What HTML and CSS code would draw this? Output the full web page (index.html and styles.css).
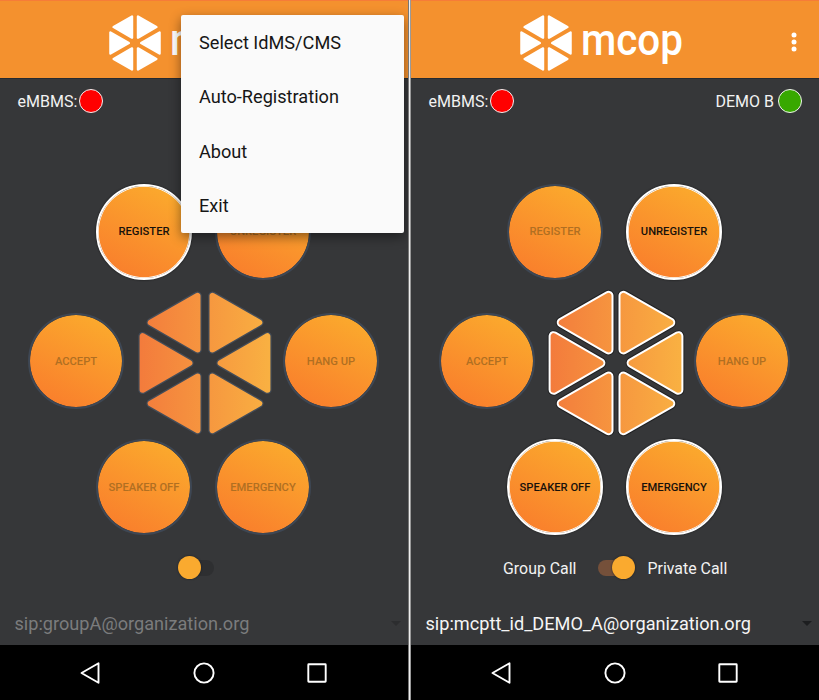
FILE: index.html
```
<!DOCTYPE html>
<html lang="en">
<head>
<meta charset="utf-8">
<title>mcop</title>
<link rel="stylesheet" href="styles.css">
</head>
<body>
<svg class="defs" width="0" height="0" aria-hidden="true">
  <defs>
    <linearGradient id="amber" gradientUnits="userSpaceOnUse" x1="-66" y1="0" x2="66" y2="0">
      <stop offset="0" stop-color="#f37b3c"/><stop offset="1" stop-color="#f9b142"/>
    </linearGradient>
    <g id="hex">
      <path d="M-54.3-40.5L-7.5-67.2V-13.6Z"/><path d="M54.3-40.5L7.5-67.2V-13.6Z"/>
      <path d="M-62.4-26.8V26.8L-15.6 0Z"/><path d="M62.4-26.8V26.8L15.6 0Z"/>
      <path d="M-54.3 40.5L-7.5 67.2V13.6Z"/><path d="M54.3 40.5L7.5 67.2V13.6Z"/>
    </g>
  </defs>
</svg>
<main class="screens">
  <section class="phone">
    <header class="bar">
      <svg class="mark" viewBox="-66 -71 132 142"><use href="#hex"/></svg>
      <svg class="word" viewBox="0 0 102 50"><text x="0" y="37" textLength="102" lengthAdjust="spacingAndGlyphs">mcop</text></svg>
    </header>
    <div class="status"><span>eMBMS:</span><i class="dot red"></i></div>
    <div class="pad">
      <div class="row"><button class="round on">REGISTER</button><button class="round">UNREGISTER</button></div>
      <div class="row wide"><button class="round">ACCEPT</button>
        <svg class="talk" viewBox="-70 -75 140 150"><use href="#hex" class="edge"/><use href="#hex" class="fill"/></svg>
        <button class="round">HANG UP</button></div>
      <div class="row"><button class="round">SPEAKER OFF</button><button class="round">EMERGENCY</button></div>
    </div>
    <div class="mode"><span></span><div class="switch"></div><span></span></div>
    <div class="target dim"><span>sip:groupA@organization.org</span><i class="caret"></i></div>
    <nav class="nav">
      <svg viewBox="0 0 24 24"><path d="M20.5 2.2V21.8L3.5 12Z"/></svg>
      <svg viewBox="0 0 24 24"><circle cx="12" cy="12" r="9.6"/></svg>
      <svg viewBox="0 0 24 24"><rect x="3.3" y="3.3" width="17.4" height="17.4" rx=".5"/></svg>
    </nav>
    <div class="menu"><div>Select IdMS/CMS</div><div>Auto-Registration</div><div>About</div><div>Exit</div></div>
  </section>
  <section class="phone live">
    <header class="bar">
      <svg class="mark" viewBox="-66 -71 132 142"><use href="#hex"/></svg>
      <svg class="word" viewBox="0 0 102 50"><text x="0" y="37" textLength="102" lengthAdjust="spacingAndGlyphs">mcop</text></svg>
      <svg class="more" viewBox="0 0 6 20"><circle cx="3" cy="3" r="2.5"/><circle cx="3" cy="10" r="2.5"/><circle cx="3" cy="17" r="2.5"/></svg>
    </header>
    <div class="status"><span>eMBMS:</span><i class="dot red"></i><span class="user">DEMO B</span><i class="dot green"></i></div>
    <div class="pad">
      <div class="row"><button class="round">REGISTER</button><button class="round on">UNREGISTER</button></div>
      <div class="row wide"><button class="round">ACCEPT</button>
        <svg class="talk" viewBox="-70 -75 140 150"><use href="#hex" class="shade"/><use href="#hex" class="edge"/><use href="#hex" class="fill"/></svg>
        <button class="round">HANG UP</button></div>
      <div class="row"><button class="round on">SPEAKER OFF</button><button class="round on">EMERGENCY</button></div>
    </div>
    <div class="mode"><span>Group Call</span><div class="switch checked"></div><span>Private Call</span></div>
    <div class="target"><span>sip:mcptt_id_DEMO_A@organization.org</span><i class="caret"></i></div>
    <nav class="nav">
      <svg viewBox="0 0 24 24"><path d="M20.5 2.2V21.8L3.5 12Z"/></svg>
      <svg viewBox="0 0 24 24"><circle cx="12" cy="12" r="9.6"/></svg>
      <svg viewBox="0 0 24 24"><rect x="3.3" y="3.3" width="17.4" height="17.4" rx=".5"/></svg>
    </nav>
  </section>
</main>
</body>
</html>
```
FILE: styles.css
```
* { box-sizing: border-box; }
body { margin: 0; font-family: Roboto, "Liberation Sans", sans-serif; overflow: hidden; }
.defs { display: block; }
.screens { display: grid; grid-template-columns: 408px 408px; column-gap: 3px; width: 819px; height: 700px; background: linear-gradient(90deg, #777 409px, #eee 409px 410px, #999 410px); }
.phone { position: relative; display: flex; flex-direction: column; height: 700px; background: #363739; overflow: hidden; }
.bar { display: flex; align-items: center; height: 79px; padding: 7px 0 0 109px; background: #f4912e; border-top: 1px solid #f67c38; border-bottom: 1px solid #252a30; }
.mark { width: 52px; height: 56px; fill: #fff; stroke: #fff; stroke-width: 6; stroke-linejoin: round; }
.word { width: 102px; height: 50px; margin-left: 9px; overflow: visible; fill: #fff; font-size: 43.5px; font-weight: 500; }
.more { width: 6px; height: 20px; margin: -2px 0 0 108px; fill: #fff; }
.status { display: flex; align-items: center; height: 44px; padding: 0 17px 0 17.5px; color: #f2f2f2; font-size: 16px; }
.dot { width: 24px; height: 24px; margin-left: 2px; border-radius: 50%; border: 1.5px solid #f2f2f2; }
.red { background: #f00; }
.green { background: #38a800; margin-left: 4px; }
.user { margin-left: auto; }
.pad { height: 352px; margin-top: 60.5px; }
.row { display: flex; gap: 23px; height: 96px; padding-left: 96px; margin-bottom: 33.5px; }
.row.wide { gap: 11px; padding-left: 28px; margin-bottom: 30px; align-items: center; }
.round { flex: none; width: 96px; height: 96px; padding: 0; border: 2px solid #3e4754; border-radius: 50%; background: linear-gradient(28deg, #f97c2c 5%, #fbaa2d 90%) padding-box; color: #b06f22; font: 500 11.2px Roboto, sans-serif; white-space: nowrap; }
.round.on { border-color: #fff; color: #17110b; box-shadow: 0 0 2px #111, inset 0 0 0 .7px #fff; }
.talk { flex: none; width: 140px; height: 150px; margin: 3px -3px 0 0; stroke-linejoin: round; }
.edge { fill: none; stroke: #454d58; stroke-width: 8.5; }
.fill { fill: url(#amber); stroke: url(#amber); stroke-width: 6; }
.live .edge { stroke: #fff; stroke-width: 10; }
.shade { fill: none; stroke: #202123; stroke-width: 12; }
.mode { display: grid; grid-template-columns: 165.5px 59.5px 1fr; align-items: center; height: 24px; margin-top: 20px; color: #f2f2f2; font-size: 15.9px; }
.mode span { padding-top: 1px; }
.mode span:first-child { text-align: right; }
.mode span:last-child { padding-left: 11.5px; }
.switch { position: relative; width: 35px; height: 16px; margin-left: 13.5px; border-radius: 8px; background: #2e2f31; }
.switch::after { content: ""; position: absolute; left: -1px; top: -4px; width: 23px; height: 23px; border-radius: 50%; background: #faaa2f; box-shadow: 0 0 2px #161b25; }
.switch.checked { background: #75503a; margin-left: 21.5px; }
.switch.checked::after { left: 13.5px; }
.target { display: flex; align-items: center; height: 30px; margin-top: 28.5px; padding: 0 7px 0 14.5px; color: #f5f5f5; font-size: 18.15px; }
.dim { color: #7b7c7d; }
.caret { margin-left: auto; border: 5px solid transparent; border-top-color: #1d1e20; border-bottom: 0; }
.dim .caret { border-top-color: #2c2d2f; }
.nav { display: flex; align-items: center; gap: 89.5px; height: 55px; margin-top: auto; padding-left: 78px; background: #000; }
.nav svg { width: 24px; height: 24px; fill: none; stroke: #fff; stroke-width: 1.9; stroke-linejoin: round; }
.menu { position: absolute; left: 181px; top: 15px; width: 222.5px; height: 218px; background: #fafafa; border-radius: 2px; box-shadow: 0 4px 12px rgba(0,0,0,.45); color: #161616; font-size: 18.15px; }
.menu div { height: 54.4px; padding-left: 18px; line-height: 55px; }
```
